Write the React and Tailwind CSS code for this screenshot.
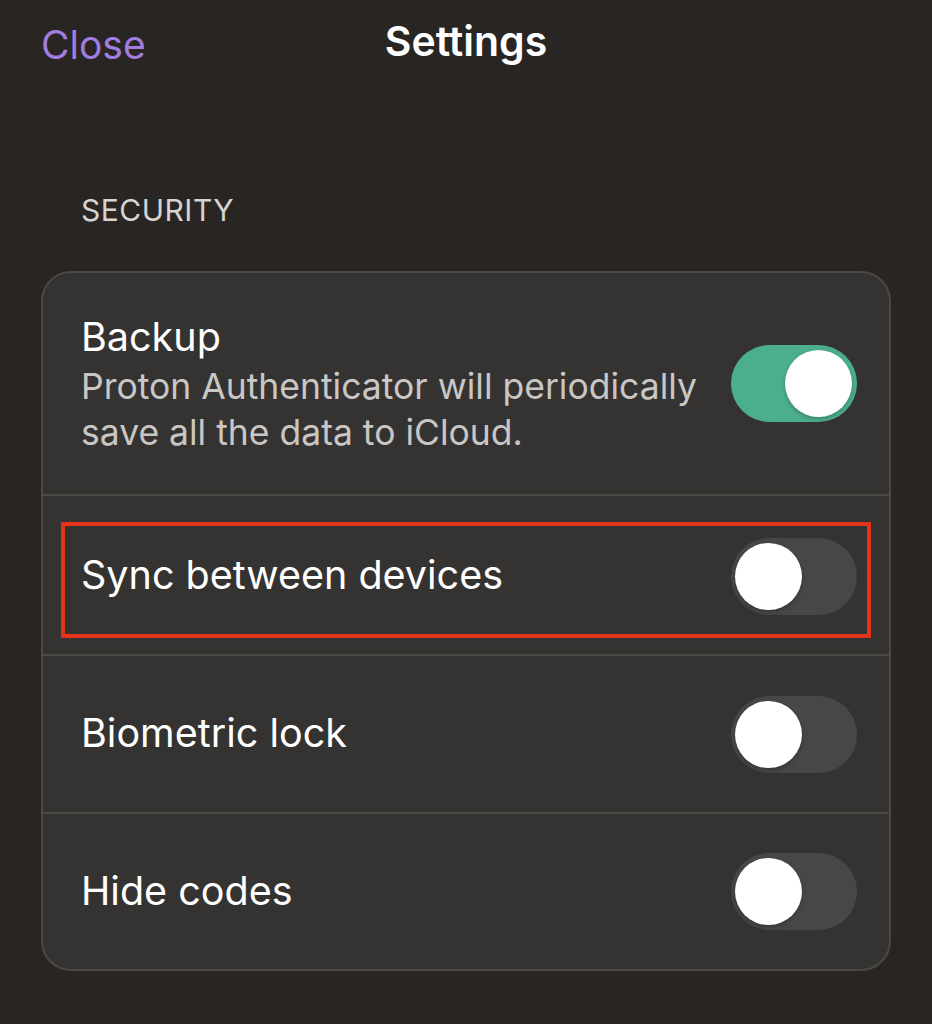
import React from "react";

function Toggle({ on }) {
  return (
    <div
      className={`relative h-[77px] w-[126px] shrink-0 rounded-full ${
        on ? "bg-[#4caf8c]" : "bg-[#484746]"
      }`}
    >
      <div
        className={`absolute top-[5px] h-[67px] w-[67px] rounded-full bg-white shadow-[0_2px_4px_rgba(0,0,0,0.25)] ${
          on ? "right-[5px]" : "left-[4px]"
        }`}
      />
    </div>
  );
}

export default function App() {
  return (
    <div
      className="min-h-[1024px] w-[932px] bg-[#282523] text-white"
      style={{ fontFamily: "Inter, 'Noto Sans', sans-serif" }}
    >
      <div className="relative flex h-[88px] items-center justify-center">
        <span className="absolute left-[41px] top-[16px] text-[39px] text-[#a07de0]">Close</span>
        <span className="mt-[-4px] text-[41px] font-semibold text-white">Settings</span>
      </div>
      <div className="px-[41px] pt-[102px]">
        <div className="pl-[40px] text-[30px] leading-[40px] tracking-[0.5px] text-[#d6d4d2]">SECURITY</div>
        <div className="mt-[41px] rounded-[30px] border-2 border-[#4b4946] bg-[#353331]">
          <div className="flex h-[223px] items-center justify-between border-b-2 border-[#4b4946] pl-[38px] pr-[32px]">
            <div className="pt-[2px]">
              <div className="text-[39.5px] leading-[48px] text-white">Backup</div>
              <div className="mt-[3px] text-[35.5px] leading-[46px] text-[#c9c7c5]">
                Proton Authenticator will periodically
                <br />
                save all the data to iCloud.
              </div>
            </div>
            <Toggle on />
          </div>
          <div className="flex h-[160px] items-start border-b-2 border-[#4b4946] px-[18px] pt-[26px]">
            <div className="flex h-[116px] w-full items-center justify-between border-[4px] border-[#e5321b] pb-[8px] pl-[16px] pr-[10px]">
              <span className="text-[39.5px] text-white">Sync between devices</span>
              <Toggle />
            </div>
          </div>
          <div className="flex h-[158px] items-center justify-between border-b-2 border-[#4b4946] pl-[38px] pr-[32px]">
            <span className="text-[39.5px] text-white">Biometric lock</span>
            <Toggle />
          </div>
          <div className="flex h-[155px] items-center justify-between pl-[38px] pr-[32px]">
            <span className="text-[39.5px] text-white">Hide codes</span>
            <Toggle />
          </div>
        </div>
      </div>
    </div>
  );
}
